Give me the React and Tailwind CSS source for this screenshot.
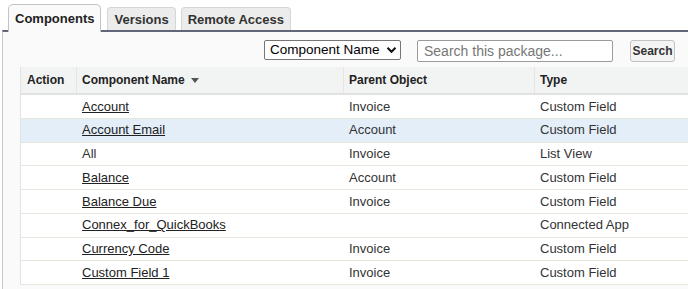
import React from "react";

const rows = [
  { name: "Account", parent: "Invoice", type: "Custom Field", link: true },
  { name: "Account Email", parent: "Account", type: "Custom Field", link: true, selected: true },
  { name: "All", parent: "Invoice", type: "List View", link: false },
  { name: "Balance", parent: "Account", type: "Custom Field", link: true },
  { name: "Balance Due", parent: "Invoice", type: "Custom Field", link: true },
  { name: "Connex_for_QuickBooks", parent: "", type: "Connected App", link: true },
  { name: "Currency Code", parent: "Invoice", type: "Custom Field", link: true },
  { name: "Custom Field 1", parent: "Invoice", type: "Custom Field", link: true },
];

// Package components tab view
export default function App() {
  return (
    <div className="w-[688px] h-[289px] overflow-hidden bg-white font-['Liberation_Sans',Arial,sans-serif] text-[#333]">
      {/* Tabs */}
      <div className="flex items-end h-[30px] pl-[8px]">
        <div className="relative z-10 -mb-[2px] h-[28px] pt-[1px] px-[6px] flex items-center bg-[#fafafa] border border-b-0 border-[#c4c4c4] rounded-t-[5px] text-[13px] font-bold text-[#222]">
          Components
        </div>
        <div className="ml-[6px] h-[23px] pt-[1px] px-[6px] flex items-center bg-[#ececec] border border-b-0 border-[#d6d6d6] rounded-t-[4px] text-[13px] font-bold text-[#333]">
          Versions
        </div>
        <div className="ml-[5px] h-[23px] pt-[1px] px-[6px] flex items-center bg-[#ececec] border border-b-0 border-[#d6d6d6] rounded-t-[4px] text-[13px] font-bold text-[#333]">
          Remote Access
        </div>
      </div>

      {/* Panel */}
      <div className="ml-[2px] h-[259px] bg-[#fafafa] border-t-2 border-t-[#62667a] border-l border-l-[#c8c8c8]">
        {/* Toolbar */}
        <div className="flex items-start justify-end pt-[8px] pr-[13px]">
          <div className="w-[137px] h-[20px] flex items-center justify-between pl-[5px] pr-[3px] bg-white border border-[#767676] rounded-[2px] text-[13.5px] text-black whitespace-nowrap">
            <span>Component Name</span>
            <svg width="11" height="8" viewBox="0 0 11 8" fill="none">
              <path d="M1.5 1.8 L5.5 5.8 L9.5 1.8" stroke="#111" strokeWidth="2" />
            </svg>
          </div>
          <div className="ml-[16px] w-[196px] h-[22px] flex items-center px-[6px] bg-white border border-[#9a9a9a] rounded-[2px] text-[14px] text-[#777] whitespace-nowrap">
            Search this package...
          </div>
          <div className="ml-[17px] w-[45px] h-[22px] flex items-center justify-center bg-[#f4f4f4] border border-[#c2c2c2] rounded-[3px] text-[12px] font-bold text-[#333]">
            Search
          </div>
        </div>

        {/* Table */}
        <div className="mt-[5px] ml-[17px] bg-white border-l border-[#e2e2e2]">
          <div className="grid grid-cols-[56px_267px_191px_1fr] h-[28px] bg-[#f2f3f3] border-b-2 border-[#e2e2e2] text-[12px] font-bold text-[#222]">
            <div className="flex items-center pl-[6px] border-r border-[#e4e4e4]">Action</div>
            <div className="flex items-center pl-[5px] border-r border-[#e4e4e4]">
              Component Name
              <svg className="ml-[6px]" width="8" height="5" viewBox="0 0 8 5">
                <path d="M0 0 H8 L4 5 Z" fill="#555" />
              </svg>
            </div>
            <div className="flex items-center pl-[5px] border-r border-[#e4e4e4]">Parent Object</div>
            <div className="flex items-center pl-[5px]">Type</div>
          </div>
          {rows.map((r) => (
            <div
              key={r.name}
              className={`grid grid-cols-[56px_267px_191px_1fr] h-[23.75px] border-b border-[#e6e6dc] text-[13px] ${
                r.selected ? "bg-[#e3eef9]" : "bg-white"
              }`}
            >
              <div />
              <div className="flex items-center pl-[5px]">
                <span className={r.link ? "underline text-[#222]" : "text-[#333]"}>{r.name}</span>
              </div>
              <div className="flex items-center pl-[5px]">{r.parent}</div>
              <div className="flex items-center pl-[5px]">{r.type}</div>
            </div>
          ))}
        </div>
      </div>
    </div>
  );
}
